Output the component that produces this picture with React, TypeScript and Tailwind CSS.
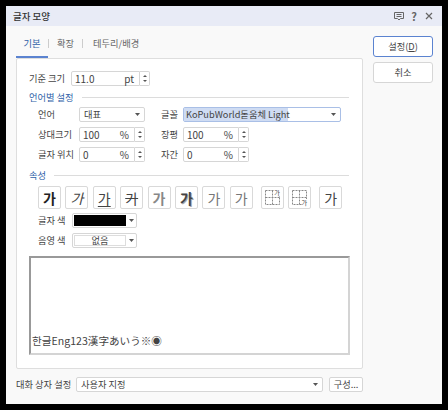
import React from "react";

const Arrow = () => (
  <svg width="5" height="3" viewBox="0 0 5 3" className="shrink-0">
    <path d="M0 0h5L2.5 3z" fill="#555" />
  </svg>
);

const Select = ({ text, className }: { text: string; className: string }) => (
  <div className={`flex items-center h-[15px] bg-white border border-[#d6d6d6] rounded-[2px] pl-[4px] pr-[4px] text-[#444] ${className}`}>
    <span className="flex-1 whitespace-nowrap">{text}</span>
    <Arrow />
  </div>
);

const Spin = ({ value, unit, className }: { value: string; unit: string; className: string }) => (
  <div className={`flex h-[15px] ${className}`}>
    <div className="flex-1 flex items-center bg-white border border-[#d6d6d6] rounded-l-[2px] pl-[3px] pr-[3px] text-[#444] text-[10px]">
      <span className="flex-1">{value}</span>
      <span className="mr-[2px]">{unit}</span>
    </div>
    <div className="w-[10px] flex flex-col items-center justify-center gap-[3px] bg-white border border-l-0 border-[#d6d6d6] rounded-r-[2px]">
      <svg width="4" height="2" viewBox="0 0 4 2"><path d="M0 2h4L2 0z" fill="#555" /></svg>
      <svg width="4" height="2" viewBox="0 0 4 2"><path d="M0 0h4L2 2z" fill="#555" /></svg>
    </div>
  </div>
);

const Header = ({ text, className }: { text: string; className: string }) => (
  <div className={`flex items-center h-[12px] pr-[1px] ${className}`}>
    <span className="text-[#2f5fa8] whitespace-nowrap mr-[8px]">{text}</span>
    <div className="flex-1 h-px bg-[#dcdcdc]" />
  </div>
);

const GlyphBtn = ({ children }: { children: React.ReactNode }) => (
  <div className="relative w-[23px] h-[23px] flex items-center justify-center bg-white border border-[#d9d9d9] rounded-[2px] text-[14px] leading-none text-[#444]">
    {children}
  </div>
);

const Grid = ({ sub }: { sub?: boolean }) => (
  <GlyphBtn>
    <svg width="15" height="15" viewBox="0 0 15 15" fill="none" stroke="#888" strokeWidth="1" strokeDasharray="2 1">
      <path d="M.5.5h14v14H.5zM.5 7.5h14M7.5.5v14" />
    </svg>
    <span className={`absolute text-[6px] leading-[7px] text-[#333] bg-white ${sub ? "bottom-[2px] right-[3px]" : "top-[2px] right-[3px]"}`}>가</span>
  </GlyphBtn>
);

const label = "whitespace-nowrap text-[#444]";

export default function App() {
  return (
    <div
      className="w-[448px] h-[410px] bg-black pt-[6px] pl-[6px] overflow-hidden text-[9.25px] leading-[13px]"
      style={{ fontFamily: '"Noto Sans CJK KR", "Noto Sans", sans-serif' }}
    >
      <div className="w-[436px] h-[398px] bg-[#f9f9f9] flex flex-col">
        {/* title bar */}
        <div className="h-[20px] shrink-0 bg-[#e8ebf6] flex items-center pl-[7px] pr-[9px] text-[#333]">
          <span className="flex-1 font-medium text-[9.5px]">글자 모양</span>
          <svg width="10" height="10" viewBox="0 0 10 10" fill="none" stroke="#666" strokeWidth="1" className="mr-[7px]">
            <path d="M.5 1.5h9v6H6.5L5 9 3.5 7.5h-3zM2.5 3.5h5M2.5 5.5h5" />
          </svg>
          <span className="text-[11px] font-bold text-[#666] mr-[8px] leading-none">?</span>
          <svg width="8" height="8" viewBox="0 0 8 8" fill="none" stroke="#666" strokeWidth="1.2">
            <path d="M1 1l6 6M7 1L1 7" />
          </svg>
        </div>

        <div className="flex pl-[10px]">
          {/* left column */}
          <div className="w-[347px]">
            {/* tabs */}
            <div className="h-[32px] flex items-end text-[#666]">
              <div className="w-[32px] h-[32px] flex items-center justify-center pt-[5px] border-b-2 border-[#5b83d0] text-[#2f5fa8]">기본</div>
              <div className="h-[32px] flex items-center pt-[5px] pb-[2px]">
                <span className="w-px h-[9px] bg-[#cccccc] mr-[8px]" />
                <span>확장</span>
                <span className="w-px h-[9px] bg-[#cccccc] mx-[8px]" />
                <span className="ml-[2px]">테두리/배경</span>
              </div>
            </div>
            {/* panel */}
            <div className="h-[311px] bg-white border border-[#dedede] rounded-[2px] pl-[12px] pr-[12px] pt-[12px]">
              <div className="flex items-center h-[15px]">
                <span className={`${label} w-[42px]`}>기준 크기</span>
                <Spin value="11.0" unit="pt" className="w-[79px]" />
              </div>
              <Header text="언어별 설정" className="mt-[5px]" />
              <div className="flex items-center h-[15px] mt-[4px] pl-[9px]">
                <span className={`${label} w-[41px]`}>언어</span>
                <Select text="대표" className="w-[66px]" />
                <span className={`${label} ml-[16px] w-[22px]`}>글꼴</span>
                <div className="flex items-center w-[158px] h-[15px] bg-white border border-[#a9bfe6] rounded-[2px] pr-[4px] text-[#444]">
                  <span className="bg-[#cfdcf3] whitespace-nowrap pl-[2px] h-[13px] w-[104px]">KoPubWorld돋움체 Light</span>
                  <span className="flex-1" />
                  <Arrow />
                </div>
              </div>
              <div className="flex items-center h-[15px] mt-[5px] pl-[9px]">
                <span className={`${label} w-[41px]`}>상대크기</span>
                <Spin value="100" unit="%" className="w-[66px]" />
                <span className={`${label} ml-[16px] w-[22px]`}>장평</span>
                <Spin value="100" unit="%" className="w-[66px]" />
              </div>
              <div className="flex items-center h-[15px] mt-[5px] pl-[9px]">
                <span className={`${label} w-[41px]`}>글자 위치</span>
                <Spin value="0" unit="%" className="w-[66px]" />
                <span className={`${label} ml-[16px] w-[22px]`}>자간</span>
                <Spin value="0" unit="%" className="w-[66px]" />
              </div>
              <Header text="속성" className="mt-[7px]" />
              <div className="flex items-center mt-[5px] pl-[9px]">
                <div className="flex gap-[4.4px]">
                  <GlyphBtn><span className="font-bold text-[#222]">가</span></GlyphBtn>
                  <GlyphBtn><span className="italic">가</span></GlyphBtn>
                  <GlyphBtn><span className="underline underline-offset-2">가</span></GlyphBtn>
                  <GlyphBtn><span className="line-through">가</span></GlyphBtn>
                  <GlyphBtn><span className="font-bold text-[#888]">가</span></GlyphBtn>
                  <GlyphBtn><span className="font-bold text-[#444] [text-shadow:1px_1px_0_#aaa]">가</span></GlyphBtn>
                  <GlyphBtn><span className="text-[#777]">가</span></GlyphBtn>
                  <GlyphBtn><span className="text-[#777]">가</span></GlyphBtn>
                </div>
                <div className="flex gap-[4.4px] ml-[8px]">
                  <Grid />
                  <Grid sub />
                </div>
                <div className="ml-[8px]">
                  <GlyphBtn>가</GlyphBtn>
                </div>
              </div>
              <div className="flex items-center h-[15px] mt-[4px] pl-[9px]">
                <span className={`${label} w-[34px]`}>글자 색</span>
                <div className="flex w-[65px] h-[15px] bg-white border border-[#d6d6d6] rounded-[2px]">
                  <div className="w-[52px] bg-black ml-px my-px" />
                  <div className="flex-1 flex items-center justify-center"><Arrow /></div>
                </div>
              </div>
              <div className="flex items-center h-[15px] mt-[5px] pl-[9px]">
                <span className={`${label} w-[34px]`}>음영 색</span>
                <div className="flex w-[65px] h-[15px] bg-white border border-[#d6d6d6] rounded-[2px]">
                  <div className="w-[52px] ml-px my-px border border-[#dddddd] flex items-center justify-center text-[#444]">없음</div>
                  <div className="flex-1 flex items-center justify-center"><Arrow /></div>
                </div>
              </div>
              <div className="mt-[8px] h-[99px] border-2 border-t-[#999999] border-l-[#999999] border-r-[#d4d4d4] border-b-[#d4d4d4] bg-white flex items-end pl-[1px] pb-[5px] text-[10.6px] leading-[14px] text-[#444] whitespace-nowrap">
                한글Eng123漢字あいう※◉
              </div>
            </div>
            {/* bottom */}
            <div className="flex items-center h-[15px] mt-[8px]">
              <span className={`${label} w-[60px]`}>대화 상자 설정</span>
              <Select text="사용자 지정" className="w-[247px]" />
              <div className="ml-[6px] w-[34px] h-[15px] flex items-center justify-center bg-white border border-[#d6d6d6] rounded-[2px] text-[#444]">구성...</div>
            </div>
          </div>
          {/* right column */}
          <div className="ml-[10px] w-[60px] pt-[10px] flex flex-col">
            <div className="h-[21px] flex items-center justify-center bg-white border-[1.5px] border-[#5b83d0] rounded-[3px] text-[#444]"><span>설정(<span className="underline">D</span>)</span></div>
            <div className="h-[21px] mt-[5px] flex items-center justify-center bg-white border border-[#d6d6d6] rounded-[3px] text-[#444]">취소</div>
          </div>
        </div>
      </div>
    </div>
  );
}
